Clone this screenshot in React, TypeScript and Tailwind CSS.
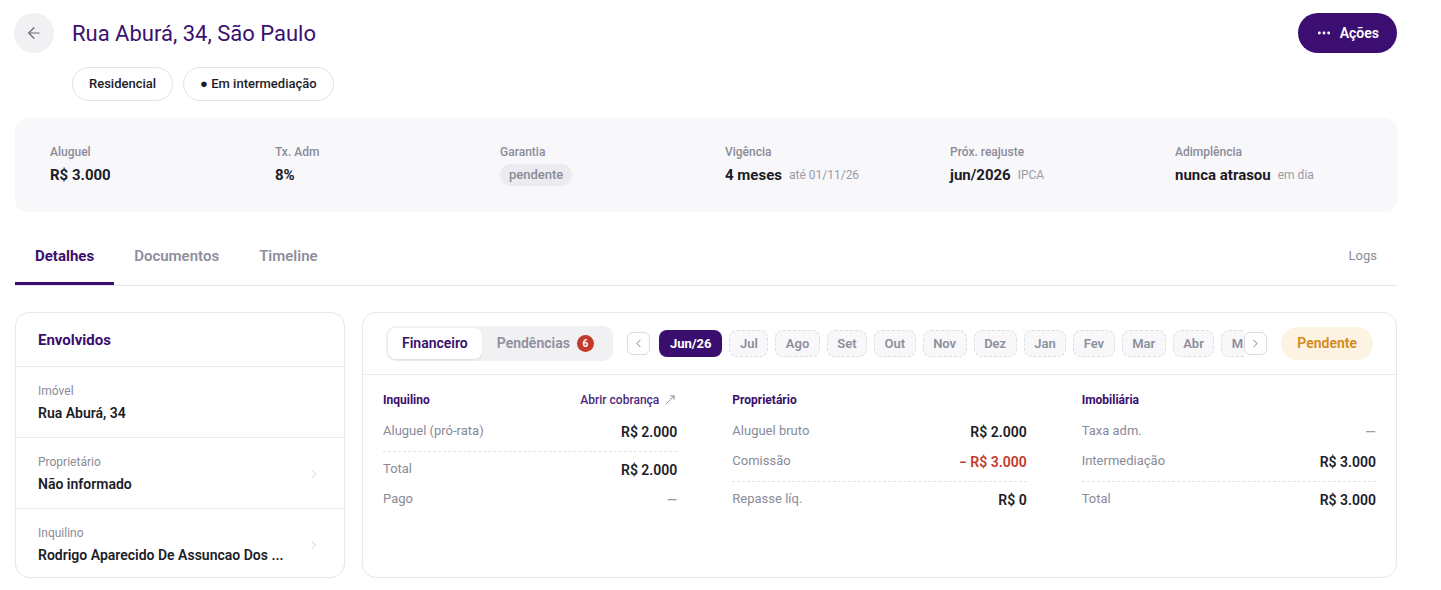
import React from 'react';
import { ArrowLeft, ChevronLeft, ChevronRight, MoreHorizontal, MoveUpRight } from 'lucide-react';

const STATS = [
  { label: 'Aluguel', value: 'R$ 3.000' },
  { label: 'Tx. Adm', value: '8%' },
  { label: 'Garantia', pill: 'pendente' },
  { label: 'Vigência', value: '4 meses', sub: 'até 01/11/26' },
  { label: 'Próx. reajuste', value: 'jun/2026', sub: 'IPCA' },
  { label: 'Adimplência', value: 'nunca atrasou', sub: 'em dia' },
];

const MONTHS = ['Jul', 'Ago', 'Set', 'Out', 'Nov', 'Dez', 'Jan', 'Fev', 'Mar', 'Abr', 'Mai'];

const PEOPLE = [
  { label: 'Imóvel', value: 'Rua Aburá, 34', arrow: false },
  { label: 'Proprietário', value: 'Não informado', arrow: true },
  { label: 'Inquilino', value: 'Rodrigo Aparecido De Assuncao Dos ...', arrow: true },
];

type Row = { label: string; value: string; tone?: 'red' | 'muted'; divider?: boolean };

const COLUMNS: { title: string; link?: boolean; rows: Row[] }[] = [
  {
    title: 'Inquilino',
    link: true,
    rows: [
      { label: 'Aluguel (pró-rata)', value: 'R$ 2.000', divider: true },
      { label: 'Total', value: 'R$ 2.000' },
      { label: 'Pago', value: '—', tone: 'muted' },
    ],
  },
  {
    title: 'Proprietário',
    rows: [
      { label: 'Aluguel bruto', value: 'R$ 2.000' },
      { label: 'Comissão', value: '− R$ 3.000', tone: 'red', divider: true },
      { label: 'Repasse líq.', value: 'R$ 0' },
    ],
  },
  {
    title: 'Imobiliária',
    rows: [
      { label: 'Taxa adm.', value: '—', tone: 'muted' },
      { label: 'Intermediação', value: 'R$ 3.000', divider: true },
      { label: 'Total', value: 'R$ 3.000' },
    ],
  },
];

function FinanceColumn({ col }: { col: (typeof COLUMNS)[number] }) {
  return (
    <div>
      <div className="flex items-center justify-between h-[14px] mb-[10px]">
        <span className="text-[12px] font-bold text-[#3a0e6e]">{col.title}</span>
        {col.link && (
          <span className="flex items-center gap-[4px] text-[12px] font-medium text-[#4b2a80]">
            Abrir cobrança
            <MoveUpRight size={14} strokeWidth={1.3} className="text-[#6b6b78]" />
          </span>
        )}
      </div>
      {col.rows.map((r) => (
        <React.Fragment key={r.label}>
          <div className="flex items-center justify-between h-[30px]">
            <span className="text-[13px] text-[#8a8a98] -mt-[2px]">{r.label}</span>
            <span
              className={
                r.tone === 'red'
                  ? 'text-[14px] font-semibold text-[#c23a2b]'
                  : r.tone === 'muted'
                    ? 'text-[14px] text-[#9a9aa6]'
                    : 'text-[14px] font-semibold text-[#1c1c28]'
              }
            >
              {r.value}
            </span>
          </div>
          {r.divider && <div className="mt-[4px] mb-[3px] border-t border-dashed border-[#e2e2e8]" />}
        </React.Fragment>
      ))}
    </div>
  );
}

export default function App() {
  return (
    <div className="min-h-[590px] bg-white font-['Roboto',sans-serif] text-[#1c1c28]">
      <div className="w-[1382px] ml-[15px] pt-[13px]">
        {/* header */}
        <div className="flex items-center justify-between">
          <div className="flex items-center">
            <button className="w-[40px] h-[40px] -ml-[1px] rounded-full bg-[#f1f1f4] flex items-center justify-center text-[#6b6b78]">
              <ArrowLeft size={18} strokeWidth={1.6} />
            </button>
            <h1 className="ml-[18px] text-[22px] font-normal text-[#3a1070] leading-[28px] mt-[1px]">Rua Aburá, 34, São Paulo</h1>
          </div>
          <button className="h-[40px] px-[18px] rounded-full bg-[#3c0e72] text-white flex items-center gap-[8px] text-[14px] font-semibold">
            <MoreHorizontal size={16} strokeWidth={2.4} />
            Ações
          </button>
        </div>
        <div className="flex gap-[10px] ml-[57px] mt-[14px]">
          <span className="h-[34px] px-[16px] rounded-full border border-[#e2e2e8] flex items-center text-[13px] font-medium">Residencial</span>
          <span className="h-[34px] px-[16px] rounded-full border border-[#e2e2e8] flex items-center text-[13px] font-medium">● Em intermediação</span>
        </div>

        {/* stats */}
        <div className="mt-[17px] rounded-[12px] bg-[#f8f8fa] pl-[35px] pr-[20px] py-[26px] flex">
          {STATS.map((s, i) => (
            <div key={s.label} className={i < STATS.length - 1 ? 'w-[225px] shrink-0' : 'flex-1 min-w-0'}>
              <div className="text-[12px] font-medium text-[#8b8b99] leading-[16px]">{s.label}</div>
              <div className="mt-[4px] h-[22px] flex items-center">
                {s.pill ? (
                  <span className="h-[22px] px-[9px] rounded-full bg-[#ececf0] text-[13px] font-medium text-[#8b8b99] flex items-center">{s.pill}</span>
                ) : (
                  <>
                    <span className="text-[15px] font-bold">{s.value}</span>
                    {s.sub && <span className="ml-[7px] text-[12px] text-[#9a9aa6]">{s.sub}</span>}
                  </>
                )}
              </div>
            </div>
          ))}
        </div>

        {/* tabs */}
        <div className="mt-[14px] flex items-end justify-between border-b border-[#e6e6ec]">
          <div className="flex">
            <div className="h-[59px] px-[20px] flex items-center text-[15px] font-bold text-[#3a0e6e] border-b-[3px] border-[#3a0e6e] -mb-px pt-[4px]">Detalhes</div>
            <div className="h-[59px] px-[20px] flex items-center text-[15px] font-semibold text-[#8e8e9c] pt-[1px]">Documentos</div>
            <div className="h-[59px] px-[20px] flex items-center text-[15px] font-semibold text-[#8e8e9c] pt-[1px]">Timeline</div>
          </div>
          <div className="h-[59px] pr-[20px] flex items-center text-[13px] text-[#8a8a98]">Logs</div>
        </div>

        {/* body */}
        <div className="mt-[26px] flex gap-[17px]">
          <div className="w-[330px] h-[266px] shrink-0 rounded-[14px] border border-[#e6e6ec] overflow-hidden">
            <div className="h-[54px] px-[22px] pt-[2px] flex items-center border-b border-[#ececf0] text-[15px] font-bold text-[#3a0e6e]">Envolvidos</div>
            {PEOPLE.map((p, i) => (
              <div key={p.label} className={`flex items-center px-[22px] pt-[16px] pb-[14px] ${i < PEOPLE.length - 1 ? 'border-b border-[#ececf0]' : ''}`}>
                <div className="flex-1 min-w-0">
                  <div className="text-[12px] leading-[16px] text-[#8b8b99]">{p.label}</div>
                  <div className="mt-[4px] text-[14px] leading-[20px] font-semibold truncate">{p.value}</div>
                </div>
                {p.arrow && <ChevronRight size={14} strokeWidth={1.5} className="ml-[18px] mr-[1px] text-[#c8c8d0]" />}
              </div>
            ))}
          </div>

          <div className="flex-1 min-w-0 h-[266px] rounded-[14px] border border-[#e6e6ec] overflow-hidden">
            <div className="h-[62px] px-[23px] flex items-center border-b border-[#ececf0]">
              <div className="h-[35px] rounded-[10px] bg-[#f1f1f4] p-[2px] flex items-center shrink-0">
                <div className="h-[31px] px-[14px] rounded-[8px] bg-white shadow-[0_1px_2px_rgba(0,0,0,0.08)] flex items-center text-[14px] font-semibold text-[#3a0e6e]">Financeiro</div>
                <div className="h-[31px] pl-[15px] pr-[17px] flex items-center gap-[7px] text-[14px] font-semibold text-[#8e8e9c]">
                  Pendências
                  <span className="w-[17px] h-[17px] rounded-full bg-[#c23a2b] text-white text-[10px] font-bold flex items-center justify-center">6</span>
                </div>
              </div>
              <button className="ml-[14px] w-[23px] h-[23px] shrink-0 rounded-[6px] border border-[#dcdce2] bg-white flex items-center justify-center text-[#6b6b78]">
                <ChevronLeft size={13} strokeWidth={1.6} />
              </button>
              <div className="ml-[9px] flex-1 min-w-0 overflow-hidden flex gap-[7px]">
                <span className="h-[27px] px-[11px] shrink-0 rounded-[8px] bg-[#3a0e6e] text-white text-[13px] font-bold flex items-center">Jun/26</span>
                {MONTHS.map((m) => (
                  <span key={m} className="h-[27px] px-[9.5px] shrink-0 rounded-[8px] border border-dashed border-[#dcdce2] bg-[#f8f8fa] text-[13px] font-semibold text-[#8e8e9c] flex items-center">{m}</span>
                ))}
              </div>
              <button className="w-[23px] h-[23px] shrink-0 rounded-[6px] border border-[#dcdce2] bg-white flex items-center justify-center text-[#6b6b78]">
                <ChevronRight size={13} strokeWidth={1.6} />
              </button>
              <span className="ml-[14px] h-[33px] px-[16px] shrink-0 rounded-full bg-[#fdf3e2] text-[#d4891c] text-[14px] font-semibold flex items-center">Pendente</span>
            </div>
            <div className="px-[20px] pt-[18px] grid grid-cols-3 gap-[55px]">
              {COLUMNS.map((c) => (
                <FinanceColumn key={c.title} col={c} />
              ))}
            </div>
          </div>
        </div>
      </div>
    </div>
  );
}
